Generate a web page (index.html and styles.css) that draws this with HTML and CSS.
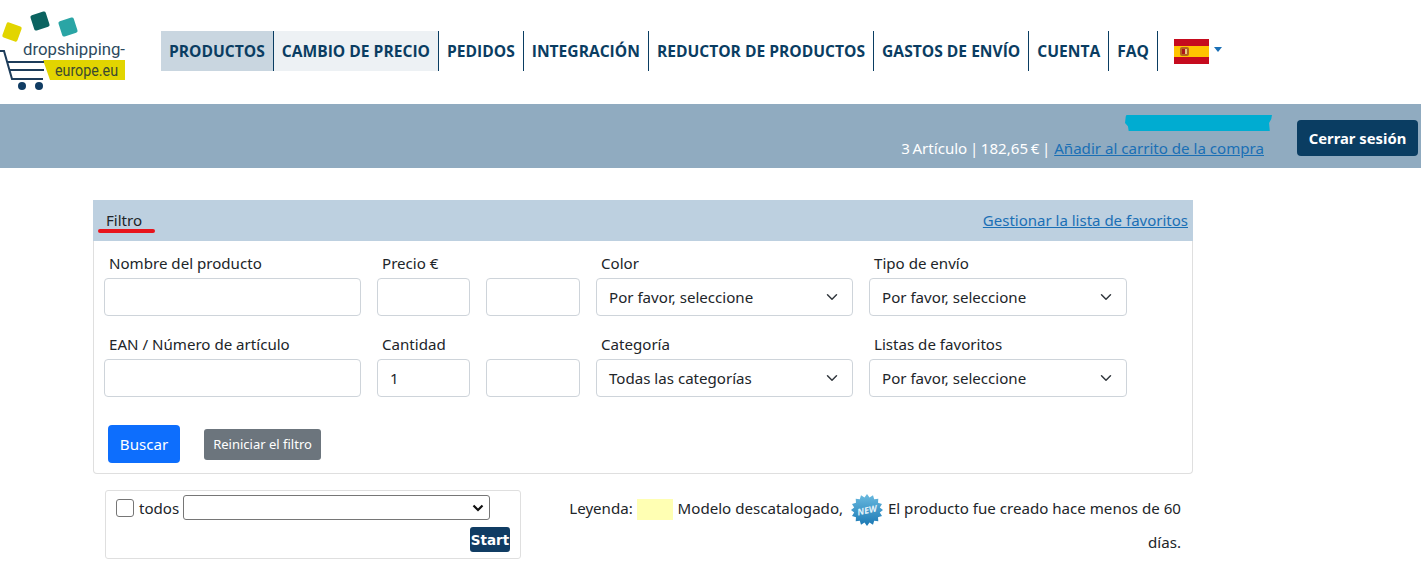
FILE: index.html
```html
<!DOCTYPE html>
<html lang="es">
<head>
  <meta charset="UTF-8" />
  <meta name="viewport" content="width=device-width, initial-scale=1.0" />
  <title>dropshipping-europe.eu — productos</title>
  <link rel="stylesheet" href="styles.css">
</head>
<body>

  <header class="site-header">
    <a class="logo" href="#">
      <svg width="126" height="92" viewBox="0 0 126 92">
        <rect x="4" y="24" width="16" height="16" rx="2" fill="#e2d500" transform="rotate(20 12 32)" />
        <rect x="32" y="13" width="16" height="16" rx="2" fill="#0b6360" transform="rotate(-18 40 21)" />
        <rect x="60" y="19" width="16" height="16" rx="2" fill="#2aa5a5" transform="rotate(-18 68 27)" />
        <polygon points="43,60 125,60 125,80 50,80" fill="#e2d500" />
        <text x="23" y="55" class="logo-top" textLength="102" lengthAdjust="spacingAndGlyphs">dropshipping-</text>
        <text x="55" y="76" class="logo-bottom" textLength="63" lengthAdjust="spacingAndGlyphs">europe.eu</text>
        <path d="M0 51H4L12 79H43M7 62H44M9 70H44" fill="none" stroke="#1d3c5a" stroke-width="2" />
        <circle cx="22" cy="86" r="4" fill="#103c63" />
        <circle cx="39" cy="86" r="4" fill="#103c63" />
      </svg>
    </a>
    <nav class="main-nav">
      <a class="active" href="#">PRODUCTOS</a>
      <a class="hovered" href="#">CAMBIO DE PRECIO</a>
      <a href="#">PEDIDOS</a>
      <a href="#">INTEGRACIÓN</a>
      <a href="#">REDUCTOR DE PRODUCTOS</a>
      <a href="#">GASTOS DE ENVÍO</a>
      <a href="#">CUENTA</a>
      <a href="#">FAQ</a>
    </nav>
    <a class="lang" href="#">
      <svg width="35" height="25" viewBox="0 0 35 25">
        <rect width="35" height="25" fill="#c60b1e" />
        <rect y="7" width="35" height="11" fill="#ffc400" />
        <rect x="6" y="8" width="9" height="9" rx="2" fill="#b5651d" />
        <rect x="8" y="10" width="3" height="5" fill="#ad1519" />
        <rect x="11" y="10" width="2" height="5" fill="#e8c98a" />
      </svg>
      <span class="caret"></span>
    </a>
  </header>

  <div class="user-bar">
    <div class="user-info">
      <div class="redacted"></div>
      <div class="cart-line"><span class="cart-count">3 Artículo | 182,65 € |</span> <a href="#">Añadir al carrito de la compra</a></div>
    </div>
    <a class="logout" href="#">Cerrar sesión</a>
  </div>

  <main class="content">
    <section class="filter">
      <div class="filter-head">
        <span class="filter-tab">Filtro</span>
        <a href="#">Gestionar la lista de favoritos</a>
      </div>
      <form class="filter-body">
        <div class="filter-grid">
          <div class="field">
            <label>Nombre del producto</label>
            <input type="text" />
          </div>
          <div class="field">
            <label>Precio €</label>
            <input type="text" />
          </div>
          <div class="field">
            <label>&nbsp;</label>
            <input type="text" />
          </div>
          <div class="field">
            <label>Color</label>
            <div class="fake-select">Por favor, seleccione</div>
          </div>
          <div class="field">
            <label>Tipo de envío</label>
            <div class="fake-select">Por favor, seleccione</div>
          </div>

          <div class="field">
            <label>EAN / Número de artículo</label>
            <input type="text" />
          </div>
          <div class="field">
            <label>Cantidad</label>
            <input type="text" value="1" />
          </div>
          <div class="field">
            <label>&nbsp;</label>
            <input type="text" />
          </div>
          <div class="field">
            <label>Categoría</label>
            <div class="fake-select">Todas las categorías</div>
          </div>
          <div class="field">
            <label>Listas de favoritos</label>
            <div class="fake-select">Por favor, seleccione</div>
          </div>
        </div>
        <div class="filter-actions">
          <button class="btn-search" type="button">Buscar</button>
          <button class="btn-reset" type="button">Reiniciar el filtro</button>
        </div>
      </form>
    </section>

    <div class="below">
      <div class="bulk">
        <div class="bulk-row">
          <span class="check"></span>
          <span>todos</span>
          <div class="bulk-select">
            <svg width="12" height="8" viewBox="0 0 12 8"><path d="M1.5 1.5L6 6l4.500-4.500" fill="none" stroke="#111" stroke-width="2.200" /></svg>
          </div>
        </div>
        <div class="bulk-foot"><button class="btn-start" type="button">Start</button></div>
      </div>
      <p class="legend">
        Leyenda: <span class="swatch"></span> Modelo descatalogado,
        <svg class="new-badge" width="32" height="32" viewBox="0 0 32 32">
          <defs>
            <linearGradient id="badge" x1="0" y1="0" x2="0" y2="1">
              <stop offset="0" stop-color="#6bbbe0" />
              <stop offset="1" stop-color="#1b78b4" />
            </linearGradient>
          </defs>
          <polygon fill="url(#badge)" points="16,0 18.500,3.500 22,1.300 23.200,5.200 27.300,4.700 27,8.800 31,10 28.800,13.400 32,16 28.800,18.600 31,22 27,23.200 27.300,27.300 23.200,26.800 22,30.700 18.500,28.500 16,32 13.500,28.500 10,30.700 8.800,26.800 4.700,27.300 5,23.200 1,22 3.200,18.600 0,16 3.200,13.400 1,10 5,8.800 4.700,4.700 8.800,5.200 10,1.300 13.500,3.500" />
          <text x="16" y="19.500" class="new-text" transform="rotate(-12 16 16)">NEW</text>
        </svg>
        El producto fue creado hace menos de 60 días.
      </p>
    </div>
  </main>

</body>
</html>
```

FILE: styles.css
```css
:root {
  --navy: #0a3d62;
  --border: #ced4da;
}

body {
  margin: 0;
  background: #fff;
  font-family: 'Noto Sans', 'Open Sans', sans-serif;
  font-size: 15.100px;
  color: #212529;
}

a {
  color: #1a6fb5;
}

.site-header {
  display: flex;
  align-items: flex-start;
  height: 104px;
}

.logo {
  display: block;
  width: 126px;
  height: 92px;
  margin-right: 35px;
}

.logo-top {
  font-family: 'Roboto', sans-serif;
  font-size: 17px;
  fill: #2d4a60;
}

.logo-bottom {
  font-family: 'Roboto', sans-serif;
  font-size: 16px;
  fill: #3a4a30;
}

.main-nav {
  display: flex;
  margin-top: 31px;
}

.main-nav a {
  display: flex;
  align-items: center;
  height: 40px;
  padding: 0 8px;
  border-right: 1px solid var(--navy);
  font-family: 'Open Sans', sans-serif;
  font-size: 15.600px;
  font-weight: 700;
  color: var(--navy);
  text-decoration: none;
  white-space: nowrap;
}

.main-nav a.active {
  background: #c9d6e0;
}

.main-nav a.hovered {
  background: #edf1f4;
}

.lang {
  display: flex;
  align-items: flex-start;
  margin: 39px 0 0 16px;
}

.caret {
  margin: 8px 0 0 5px;
  border-top: 5px solid #1a6fb5;
  border-left: 4px solid transparent;
  border-right: 4px solid transparent;
}

.user-bar {
  display: flex;
  justify-content: flex-end;
  align-items: flex-start;
  height: 64px;
  padding-right: 3px;
  background: #90abc0;
}

.user-info {
  display: flex;
  flex-direction: column;
  align-items: flex-end;
  margin-right: 33px;
  color: #fff;
}

.redacted {
  width: 147px;
  height: 16px;
  margin: 11px -8px 0 0;
  background: #00acd1;
  clip-path: polygon(1% 0, 100% 0, 99.500% 25%, 98% 50%, 98.500% 100%, 2.500% 100%, 2% 70%, 0 50%, 0.500% 10%);
}

.cart-line {
  margin-top: 7px;
  line-height: 20px;
}

.cart-count {
  word-spacing: -1.300px;
}

.logout {
  margin-top: 16px;
  width: 121px;
  height: 36px;
  line-height: 36px;
  text-align: center;
  background: var(--navy);
  border-radius: 4px;
  color: #fff;
  font-size: 14.800px;
  font-weight: 700;
  text-decoration: none;
}

.content {
  width: 1100px;
  margin: 32px 0 0 93px;
}

.filter-head {
  display: flex;
  justify-content: space-between;
  height: 41px;
  padding: 0 5px 0 13px;
  line-height: 41px;
  background: #bdd0e0;
}

.filter-head a {
  font-size: 15px;
}

.filter-tab {
  position: relative;
}

.filter-tab::after {
  content: '';
  position: absolute;
  left: -8px;
  top: 29px;
  width: 57px;
  height: 4px;
  border-radius: 2px;
  background: #e8141c;
}

.filter-body {
  height: 233px;
  box-sizing: border-box;
  padding-left: 10px;
  border: 1px solid #dfdfdf;
  border-top: 0;
  border-radius: 0 0 4px 4px;
}

.filter-grid {
  display: grid;
  grid-template-columns: 257px 93px 94px 257px 258px;
  column-gap: 16px;
  row-gap: 16px;
  padding-top: 10px;
}

.field label {
  display: block;
  height: 27px;
  padding-left: 5px;
  line-height: 24px;
}

.field input,
.fake-select {
  display: block;
  box-sizing: border-box;
  width: 100%;
  height: 38px;
  padding: 0 12px;
  border: 1px solid var(--border);
  border-radius: 4px;
  font: inherit;
  color: #212529;
  line-height: 36px;
}

.fake-select {
  background: no-repeat right 14px center / 12px url("data:image/svg+xml,%3Csvg xmlns='http://www.w3.org/2000/svg' viewBox='0 0 16 16'%3E%3Cpath fill='none' stroke='%23343a40' stroke-linecap='round' stroke-linejoin='round' stroke-width='2' d='M2 5l6 6 6-6'/%3E%3C/svg%3E");
}

.filter-actions {
  display: flex;
  align-items: center;
  gap: 24px;
  margin: 28px 0 0 4px;
}

.btn-search,
.btn-reset {
  border: 0;
  color: #fff;
  font: inherit;
}

.btn-search {
  width: 72px;
  height: 38px;
  background: #0d6efd;
  border-radius: 4px;
}

.btn-reset {
  width: 117px;
  height: 31px;
  background: #6c757d;
  border-radius: 3px;
  font-size: 13px;
}

.below {
  display: flex;
  align-items: flex-start;
  margin: 16px 12px 0 12px;
}

.bulk {
  box-sizing: border-box;
  flex: none;
  width: 416px;
  height: 69px;
  padding: 4px 10px;
  border: 1px solid #dfdfdf;
  border-radius: 3px;
}

.bulk-row {
  display: flex;
  align-items: center;
  gap: 5px;
}

.check {
  box-sizing: border-box;
  width: 18px;
  height: 18px;
  border: 1px solid #767676;
  border-radius: 3px;
}

.bulk-select {
  box-sizing: border-box;
  display: flex;
  justify-content: flex-end;
  align-items: center;
  width: 307px;
  height: 25px;
  margin-left: -1px;
  padding-right: 5px;
  border: 1px solid #767676;
  border-radius: 3px;
}

.bulk-foot {
  display: flex;
  justify-content: flex-end;
  margin-top: 7px;
}

.btn-start {
  width: 40px;
  height: 25px;
  padding: 0;
  border: 0;
  border-radius: 3px;
  background: #103c63;
  color: #fff;
  font: 700 13.500px 'DejaVu Sans', sans-serif;
}

.legend {
  flex: 1;
  margin: 1px 0 0 24px;
  text-align: right;
  line-height: 34px;
}

.swatch {
  display: inline-block;
  width: 36px;
  height: 21px;
  margin: 0 1px 0 0;
  background: #ffffb3;
  vertical-align: middle;
}

.new-badge {
  margin: -4px 1px -4px 4px;
  vertical-align: middle;
}

.new-text {
  font-family: 'Open Sans', sans-serif;
  font-size: 9px;
  font-weight: 700;
  font-style: italic;
  fill: #e6f3fa;
  text-anchor: middle;
}
```
